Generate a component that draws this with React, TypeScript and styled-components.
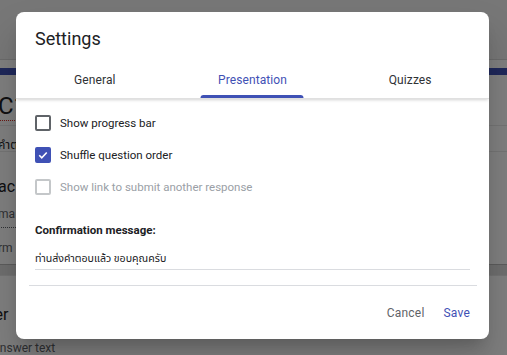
import styled, { createGlobalStyle } from 'styled-components';

const GlobalStyle = createGlobalStyle`
    html, body {
        margin: 0;
        padding: 0;
        width: 507px;
        height: 355px;
        overflow: hidden;
        font-family: Roboto, "Noto Sans", "DejaVu Sans", sans-serif;
    }
`;

const Page = styled.div`
    position: relative;
    width: 507px;
    height: 355px;
    overflow: hidden;
    background: #ffffff;
`;

/* --- the form behind the dialog --- */
const Header = styled.div`
    height: 59px;
    background: #eeeeee;
    border-bottom: 1px solid #d6d6d6;
`;

const FormCard = styled.section<{ $top?: boolean }>`
    margin: ${(p) => (p.$top ? '8px' : '0')} -40px 0 -12px;
    border-top: ${(p) => (p.$top ? '7px solid #3f51b5' : 'none')};
    background: #ffffff;
    padding: 0 0 0 10px;
`;

const FormTitle = styled.div`
    font-size: 24px;
    color: #202124;
    padding-top: 17px;
    height: 33px;
    border-bottom: 1px solid #e8e8e8;
    span {
        border-bottom: 1px dotted #d93025;
    }
`;

const FormDesc = styled.div`
    font-family: Roboto, "Noto Sans", "Noto Sans Thai", sans-serif;
    font-size: 12px;
    color: #202124;
    padding-top: 10px;
    height: 15px;
    border-bottom: 1px solid #e8e8e8;
`;

const QuestionTitle = styled.div`
    font-size: 16px;
    color: #202124;
    padding-top: 25px;
`;

const QuestionHint = styled.div`
    font-size: 12px;
    color: #5f6368;
    padding-top: 11px;
    width: 200px;
    padding-bottom: 6px;
    border-bottom: 1px dotted #5f6368;
`;

const QuestionNote = styled.div`
    font-size: 12px;
    color: #5f6368;
    padding-top: 13px;
    height: 23px;
`;

const CardGap = styled.div`
    height: 10px;
    background: #dcdcdc;
    border-top: 1px solid #b8b8b8;
    border-bottom: 1px solid #e6e6e6;
`;

const AnswerLabel = styled.div`
    font-size: 16px;
    color: #202124;
    padding-top: 29px;
    margin-left: -43px;
`;

const AnswerHint = styled.div`
    font-size: 12px;
    color: #5f6368;
    padding-top: 17px;
    margin-left: -6px;
`;

/* --- modal --- */
const Overlay = styled.div`
    position: absolute;
    inset: 0;
    background: rgba(0, 0, 0, 0.5);
    display: flex;
    align-items: flex-start;
    justify-content: flex-start;
    padding: 12px 0 0 16px;
`;

const Dialog = styled.div`
    width: 473px;
    height: 327px;
    background: #ffffff;
    border-radius: 8px;
    box-shadow: 0 11px 15px -7px rgba(0, 0, 0, 0.2), 0 24px 38px 3px rgba(0, 0, 0, 0.14);
    display: flex;
    flex-direction: column;
    overflow: hidden;
`;

const Title = styled.h2`
    margin: 0;
    padding: 16px 19px 0;
    height: 36px;
    font-size: 18px;
    font-weight: 400;
    color: #202124;
    line-height: 22px;
`;

const TabBar = styled.div`
    display: grid;
    grid-template-columns: repeat(3, 1fr);
    height: 34px;
    box-shadow: 0 2px 3px -1px rgba(0, 0, 0, 0.18);
    border-bottom: 1px solid #e0e0e0;
`;

const Tab = styled.div<{ $active?: boolean }>`
    display: flex;
    align-items: center;
    justify-content: center;
    position: relative;
    font-size: 12px;
    font-weight: 400;
    letter-spacing: 0.1px;
    color: ${(p) => (p.$active ? '#3f51b5' : '#2f3235')};
    padding-bottom: 3px;
    &::after {
        content: '';
        display: ${(p) => (p.$active ? 'block' : 'none')};
        position: absolute;
        left: 50%;
        transform: translateX(-50%);
        bottom: 0;
        width: 103px;
        height: 3px;
        border-radius: 3px 3px 0 0;
        background: #3f51b5;
    }
`;

const Body = styled.div`
    padding: 8px 19px 0;
    display: flex;
    flex-direction: column;
`;

const CheckRow = styled.label<{ $disabled?: boolean }>`
    display: flex;
    align-items: center;
    gap: 9px;
    height: 32px;
    font-size: 11.5px;
    color: ${(p) => (p.$disabled ? '#9aa0a6' : '#202124')};
`;

const Box = styled.span<{ $checked?: boolean; $disabled?: boolean }>`
    box-sizing: border-box;
    width: 16px;
    height: 16px;
    border-radius: 2px;
    border: 2px solid
        ${(p) => (p.$checked ? '#3f51b5' : p.$disabled ? '#c4c7c9' : '#5f6368')};
    background: ${(p) => (p.$checked ? '#3f51b5' : 'transparent')};
    display: flex;
    align-items: center;
    justify-content: center;
    svg {
        width: 12px;
        height: 12px;
    }
`;

const SectionLabel = styled.div`
    margin-top: 20px;
    font-size: 11.5px;
    font-weight: 700;
    color: #202124;
`;

const Field = styled.div`
    font-family: Roboto, "Noto Sans", "Noto Sans Thai", "DejaVu Sans", sans-serif;
    margin-top: 14px;
    padding-bottom: 2px;
    font-size: 10.6px;
    color: #202124;
    border-bottom: 1px solid #dadce0;
`;

const Divider = styled.hr`
    margin: 15px 12px 0 13px;
    border: none;
    border-top: 1px solid #dadce0;
`;

const Actions = styled.div`
    display: flex;
    justify-content: flex-end;
    gap: 19px;
    padding: 20px 19px 0;
`;

const TextButton = styled.button<{ $primary?: boolean }>`
    border: none;
    background: none;
    padding: 0;
    font-family: Roboto, "Noto Sans", sans-serif;
    font-size: 12px;
    font-weight: 400;
    letter-spacing: 0.2px;
    color: ${(p) => (p.$primary ? '#3f51b5' : '#5f6368')};
`;

const Check = () => (
    <svg viewBox="0 0 24 24" fill="none">
        <path d="M4.5 12.5l5 5 10-10.5" stroke="#ffffff" strokeWidth="3.2" />
    </svg>
);

const options = [
    { label: 'Show progress bar', checked: false, disabled: false },
    { label: 'Shuffle question order', checked: true, disabled: false },
    { label: 'Show link to submit another response', checked: false, disabled: true },
];

export default function App() {
    return (
        <Page>
            <GlobalStyle />
            <Header />
            <FormCard $top>
                <FormTitle>
                    <span>C1</span>
                </FormTitle>
                <FormDesc>คำตอบ</FormDesc>
                <QuestionTitle>ac</QuestionTitle>
                <QuestionHint>ma</QuestionHint>
                <QuestionNote>rm</QuestionNote>
            </FormCard>
            <CardGap />
            <FormCard>
                <AnswerLabel>Answer</AnswerLabel>
                <AnswerHint>Answer text</AnswerHint>
            </FormCard>

            <Overlay>
                <Dialog>
                    <Title>Settings</Title>
                    <TabBar>
                        <Tab>General</Tab>
                        <Tab $active>Presentation</Tab>
                        <Tab>Quizzes</Tab>
                    </TabBar>
                    <Body>
                        {options.map((o) => (
                            <CheckRow key={o.label} $disabled={o.disabled}>
                                <Box $checked={o.checked} $disabled={o.disabled}>
                                    {o.checked && <Check />}
                                </Box>
                                {o.label}
                            </CheckRow>
                        ))}
                        <SectionLabel>Confirmation message:</SectionLabel>
                        <Field>ท่านส่งคำตอบแล้ว ขอบคุณครับ</Field>
                    </Body>
                    <Divider />
                    <Actions>
                        <TextButton>Cancel</TextButton>
                        <TextButton $primary>Save</TextButton>
                    </Actions>
                </Dialog>
            </Overlay>
        </Page>
    );
}
